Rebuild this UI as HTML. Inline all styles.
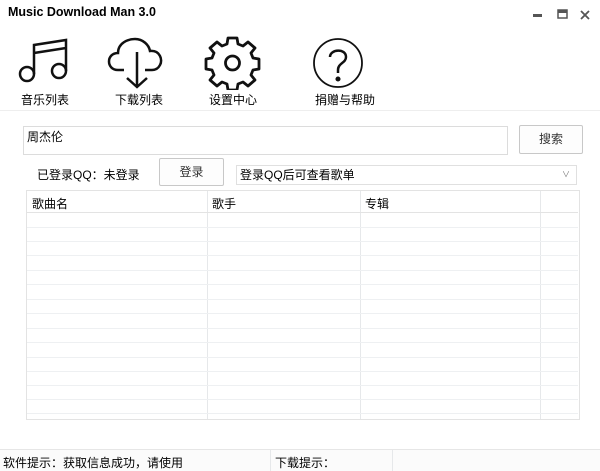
<!DOCTYPE html>
<html><head><meta charset="utf-8"><style>
*{margin:0;padding:0;box-sizing:border-box}
body{width:600px;height:471px;background:#fff;font-family:"Liberation Sans","Noto Sans CJK SC",sans-serif;font-size:12px;color:#000;position:relative;overflow:hidden}
.a{position:absolute}
.lbl{font-size:12px;top:91px;white-space:nowrap}
.btn{position:absolute;border:1px solid #c8c8c8;background:#fdfdfd;border-radius:2px;text-align:center;font-size:12px;color:#333}
.row{position:absolute;left:27px;width:551px;height:1px;background:#eef0f2}
.col{position:absolute;width:1px;background:#e6e8ea}
</style></head><body>
<div class="a" style="left:8px;top:5px;font-weight:bold;font-size:12.5px">Music Download Man 3.0</div>
<svg class="a" style="left:530px;top:6px" width="65" height="18">
<rect x="3" y="8" width="9" height="3" fill="#555"/>
<rect x="28" y="4" width="9" height="8" fill="none" stroke="#555" stroke-width="1.5"/><rect x="28" y="4" width="9" height="3" fill="#555"/>
<path d="M51 5 L59 13 M59 5 L51 13" stroke="#555" stroke-width="1.8"/>
</svg>
<svg class="a" style="left:0;top:30px" width="400" height="60" fill="none" stroke="#111" stroke-width="2.5">
<circle cx="27" cy="44" r="7"/><circle cx="59" cy="41" r="7"/>
<path d="M34 44 V15 L66 10 V41 M34 23 L66 18"/>
<path d="M124 40 H118 C106 40 106 23 118 23 C118 13 128 9 135 9 C143 9 149 15 150 21 C160 20 163 30 160 35 C158 39 155 40 152 40 H145"/>
<path d="M137 22 V56 M127 48 L137 57 L147 48"/>
<path d="M228 8 h9 l1 6 l5 2 l5 -4 l7 6 l-4 5 l2 5 l6 1 v10 l-6 1 l-2 5 l4 5 l-7 6 l-5 -4 l-5 2 l-1 6 h-9 l-1 -6 l-5 -2 l-5 4 l-7 -6 l4 -5 l-2 -5 l-6 -1 v-10 l6 -1 l2 -5 l-4 -5 l7 -6 l5 4 l5 -2 z" stroke-width="2.8" stroke-linejoin="round"/>
<circle cx="232.5" cy="33" r="7" stroke-width="2.8"/>
<circle cx="338" cy="33" r="24" stroke-width="1.8"/>
<path d="M330 27 C330 19 346 18 346 27 C346 33 338 33 338 40 V43"/>
<circle cx="338" cy="49" r="1.3" fill="#111"/>
</svg>
<div class="a lbl" style="left:21px">音乐列表</div>
<div class="a lbl" style="left:115px">下载列表</div>
<div class="a lbl" style="left:209px">设置中心</div>
<div class="a lbl" style="left:315px">捐赠与帮助</div>
<div class="a" style="left:0;top:110px;width:600px;height:1px;background:#eee"></div>
<div class="a" style="left:23px;top:126px;width:485px;height:29px;border:1px solid #dcdcdc;padding:1px 3px">周杰伦</div>
<div class="btn" style="left:519px;top:125px;width:64px;height:29px;line-height:27px">搜索</div>
<div class="a" style="left:37px;top:166px">已登录QQ：未登录</div>
<div class="btn" style="left:159px;top:158px;width:65px;height:28px;line-height:26px">登录</div>
<div class="a" style="left:236px;top:165px;width:341px;height:20px;border:1px solid #e0e0e0;padding:1px 3px;line-height:16px">登录QQ后可查看歌单<span style="position:absolute;right:6px;top:1px;color:#777;font-size:8px">&#8744;</span></div>
<div class="a" style="left:26px;top:190px;width:554px;height:230px;border:1px solid #e3e3e3"></div>
<div class="a" style="left:32px;top:195px">歌曲名</div>
<div class="a" style="left:212px;top:195px">歌手</div>
<div class="a" style="left:365px;top:195px">专辑</div>
<div class="col" style="left:207px;top:191px;height:228px"></div>
<div class="col" style="left:360px;top:191px;height:228px"></div>
<div class="col" style="left:540px;top:191px;height:228px"></div>
<div class="row" style="top:212px;background:#e3e3e3"></div>
<div class="row" style="top:227px"></div><div class="row" style="top:241px"></div><div class="row" style="top:255px"></div><div class="row" style="top:270px"></div><div class="row" style="top:284px"></div><div class="row" style="top:299px"></div><div class="row" style="top:313px"></div><div class="row" style="top:328px"></div><div class="row" style="top:342px"></div><div class="row" style="top:357px"></div><div class="row" style="top:371px"></div><div class="row" style="top:385px"></div><div class="row" style="top:399px"></div><div class="row" style="top:413px"></div>
<div class="a" style="left:0;top:449px;width:600px;height:1px;background:#e6e6e6"></div>
<div class="a" style="left:0;top:450px;width:600px;height:21px;background:#fbfbfb"></div>
<div class="col" style="left:270px;top:450px;height:21px"></div>
<div class="col" style="left:392px;top:450px;height:21px"></div>
<div class="a" style="left:3px;top:454px">软件提示：获取信息成功，请使用</div>
<div class="a" style="left:275px;top:454px">下载提示：</div>
</body></html>
